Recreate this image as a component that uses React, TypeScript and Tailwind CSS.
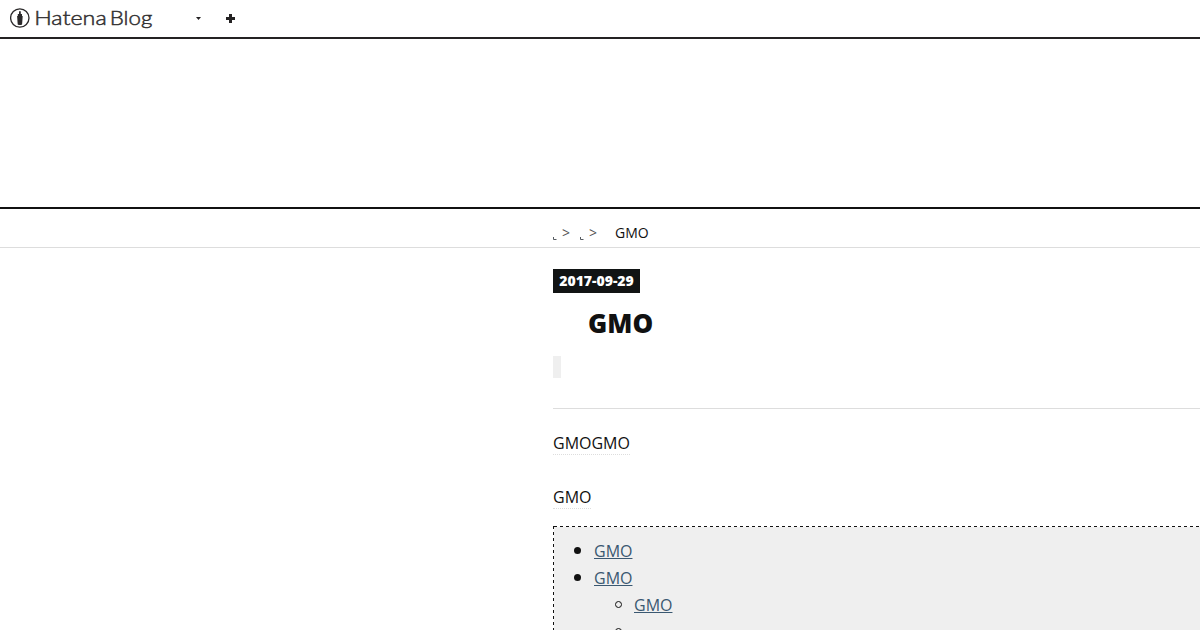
const tocLink = 'text-[#3a5871] underline decoration-[#3a5871]'

const HatenaLogo = () => {
  return (
    <svg width="146" height="37" viewBox="0 0 146 37" className="block">
      <circle cx="9.800" cy="18" r="9.200" fill="none" stroke="#2b292a" strokeWidth="1.3" />
      <path d="M9 11.200h1.800v2.800h1.200v2h.7l-.6 8.500q-2.200 1-4.400 0L7.100 16h.7v-2H9z" fill="#2b292a" />
      <g fill="#333132" fontSize="20.500" fontFamily="Lato, sans-serif" className="font-light" stroke="#333132" strokeWidth="0.500">
        <text x="24.200" y="25" textLength="72.500" lengthAdjust="spacingAndGlyphs">Hatena</text>
        <text x="99.800" y="25" textLength="42.500" lengthAdjust="spacingAndGlyphs">Blog</text>
      </g>
    </svg>
  )
}

const GlobalHeader = () => {
  return (
    <header className="flex h-[39px] items-center border-b-2 border-[#242223] pl-[10px]">
      <HatenaLogo />
      <svg width="5" height="3" viewBox="0 0 5 3" className="ml-10">
        <path d="M0 0h5L2.500 3z" fill="#242223" />
      </svg>
      <svg width="9" height="9" viewBox="0 0 9 9" className="ml-[25px]">
        <path d="M3 0h3v3h3v3H6v3H3V6H0V3h3z" fill="#242223" />
      </svg>
    </header>
  )
}

const Corner = () => {
  return (
    <svg width="5" height="4" viewBox="0 0 5 4" className="mr-1 mt-2.5">
      <path d="M.5 1v2.500H3.500" fill="none" stroke="#555a60" />
    </svg>
  )
}

const Breadcrumb = () => {
  return (
    <nav className="flex h-[39px] items-center border-b border-[#dddddd] pl-[553px] pt-[9px] text-sm leading-5">
      <Corner />
      <span className="w-[18px] text-[#555555]">&gt;</span>
      <Corner />
      <span className="w-[26px] text-[#555555]">&gt;</span>
      <span>GMO</span>
    </nav>
  )
}

const Disc = () => <span className="mb-0.5 ml-5 mr-[13px] size-[7px] rounded-full bg-[#111111]" />

const Circle = () => <span className="mb-0.5 ml-[61px] mr-3 size-[7px] rounded-full border border-[#111111]" />

const Toc = () => {
  return (
    <div className="mt-[15px] flex bg-[#efefef]">
      <div className="w-px bg-[repeating-linear-gradient(to_bottom,#111_0_3px,#fff_3px_6px)]" />
      <div className="grow">
        <div className="h-px bg-[repeating-linear-gradient(to_right,#111_0_3px,#fff_3px_6px)]" />
        <ul className="py-[11px]">
          <li className="flex items-center"><Disc /><a className={tocLink}>GMO</a></li>
          <li className="flex items-center"><Disc /><a className={tocLink}>GMO</a></li>
          <li className="flex items-center"><Circle /><a className={tocLink}>GMO</a></li>
          <li className="flex h-[27px] items-center"><Circle /></li>
        </ul>
      </div>
    </div>
  )
}

const Entry = () => {
  return (
    <article className="ml-[553px] w-[840px] pt-[21px]">
      <time className="block h-6 w-[87px] bg-[#111414] text-center text-sm font-extrabold leading-6 text-white">2017-09-29</time>
      <h1 className="mt-[11px] pl-[35px] text-[26px] font-extrabold leading-[39px]">GMO</h1>
      <div className="mt-[13px] h-[22px] w-2 bg-[#efefef]" />
      <div className="mt-[30px] border-t border-[#dddddd] pt-[21px] leading-[27px]">
        <p className="mb-[27px] h-[27px]">
          <span className="border-b border-dotted border-[#dddddd]">GMOGMO</span>
        </p>
        <p className="h-[27px]">
          <span className="border-b border-dotted border-[#dddddd]">GMO</span>
        </p>
        <Toc />
      </div>
    </article>
  )
}

const App = () => {
  return (
    <div className="h-[630px] w-full overflow-hidden bg-white font-['Open_Sans',sans-serif] text-base text-[#111111]">
      <GlobalHeader />
      <div className="h-[170px] border-b-2 border-[#111111]" />
      <Breadcrumb />
      <Entry />
    </div>
  )
}

export default App
